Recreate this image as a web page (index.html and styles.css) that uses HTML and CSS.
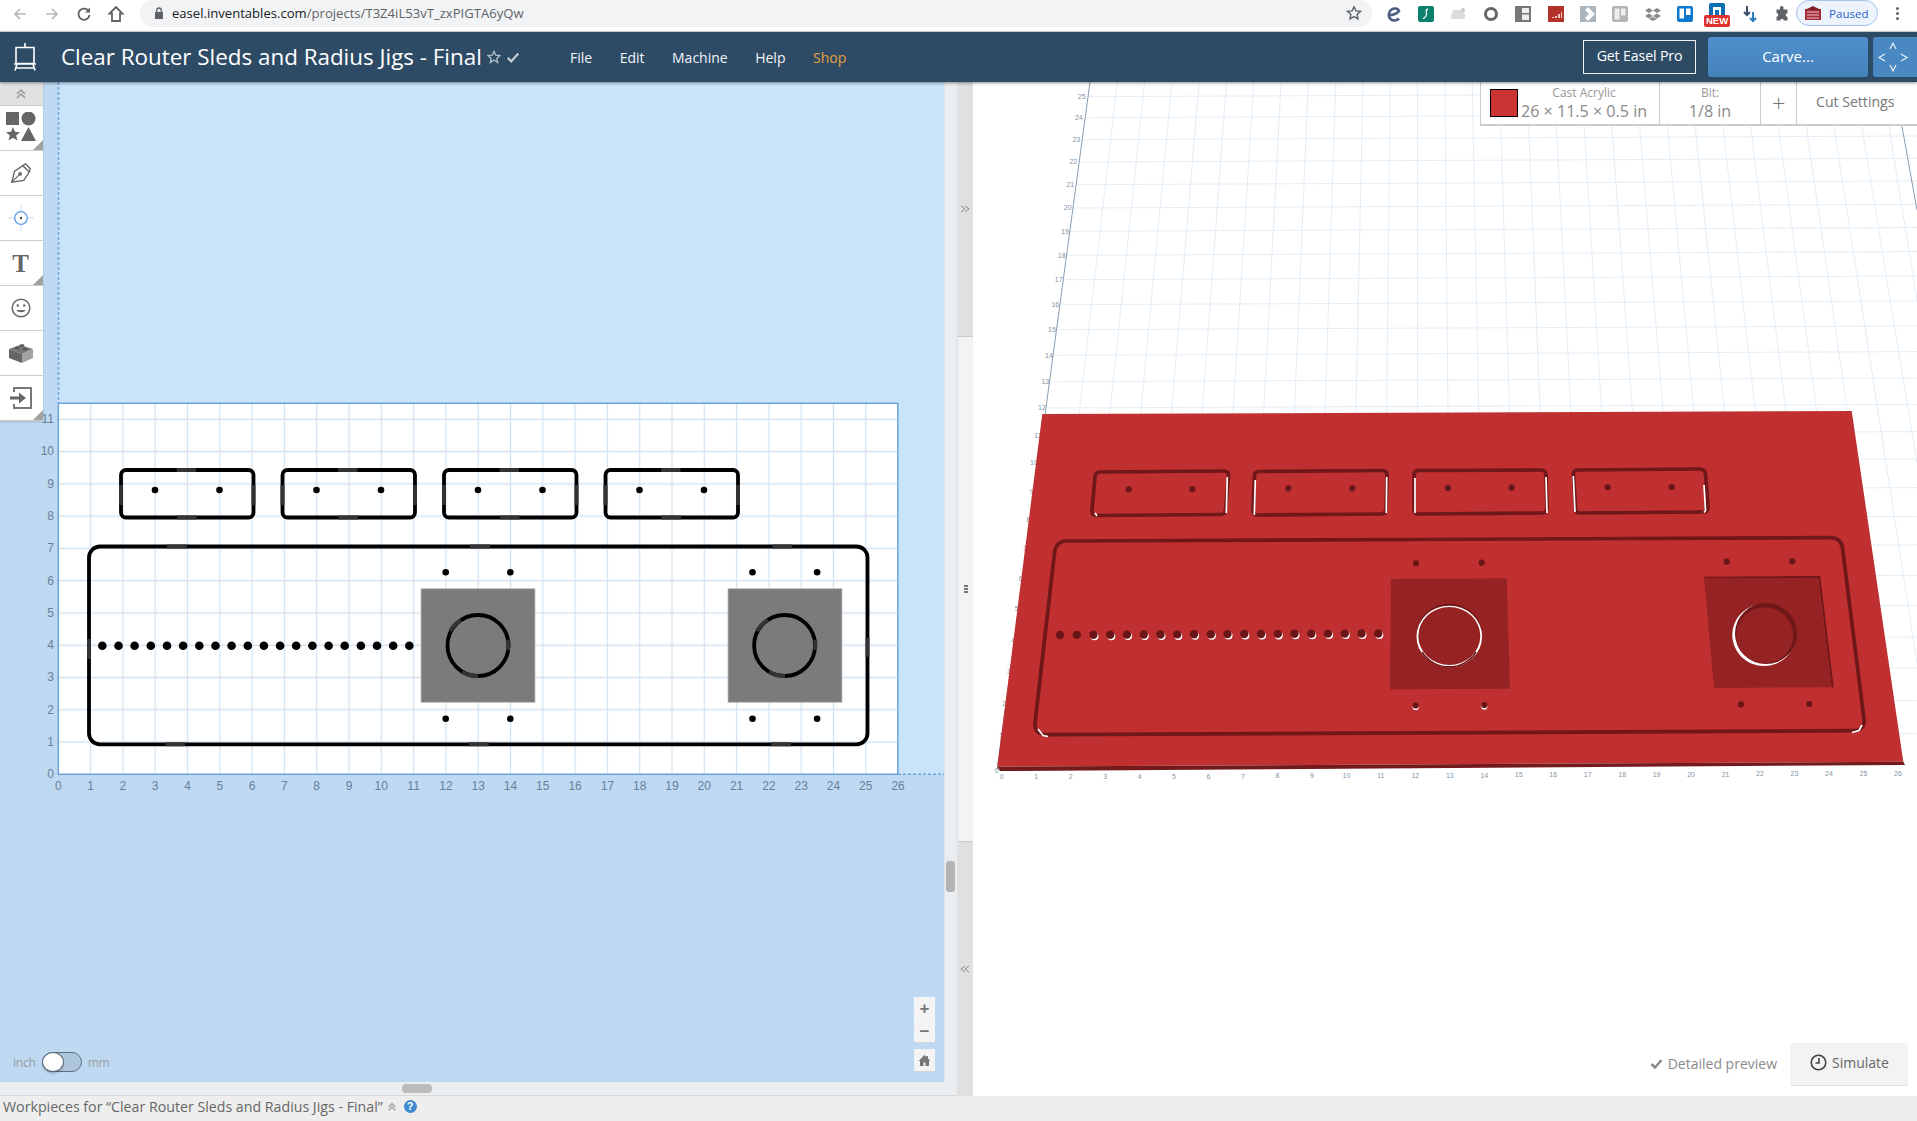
FILE: index.html
```html
<!DOCTYPE html>
<html lang="en">
<head>
<meta charset="utf-8">
<title>Clear Router Sleds and Radius Jigs - Final</title>
<link rel="stylesheet" href="styles.css">
</head>
<body>
<div class="chrome">
  <div class="slot"><svg width="16" height="16" viewBox="0 0 16 16"><path class="nav-off" d="M14 8H3M8 3L3 8l5 5"/></svg></div>
  <div class="slot"><svg width="16" height="16" viewBox="0 0 16 16"><path class="nav-off" d="M2 8h11M8 3l5 5-5 5"/></svg></div>
  <div class="slot"><svg width="16" height="16" viewBox="0 0 16 16"><path class="nav-on" d="M13 5.5A5.6 5.6 0 1 0 13.6 9"/><path class="nav-fill" d="M14 1.5v5H9z"/></svg></div>
  <div class="slot"><svg width="18" height="18" viewBox="0 0 18 18"><path class="nav-on" d="M9 2L2.5 8.5H5V16h8V8.500h2.500z"/></svg></div>
  <div class="omnibox">
    <svg class="lock" width="10" height="12" viewBox="0 0 10 12"><path d="M1 5h8v7H1z"/><path class="lock-arc" d="M2.800 5V3.200a2.200 2.200 0 0 1 4.400 0V5"/></svg>
    <span class="host">easel.inventables.com</span><span class="path">/projects/T3Z4iL53vT_zxPIGTA6yQw</span>
    <svg class="omni-star" width="16" height="16" viewBox="0 0 16 16"><path d="M8 1.800l1.900 4.100 4.500.5-3.300 3 .9 4.400L8 11.600l-4 2.200.9-4.400-3.300-3 4.500-.5z"/></svg>
  </div>
  <div class="exts">
    <div class="ext"><svg width="18" height="18" viewBox="0 0 18 18"><path d="M3 10c4 .5 9-1 11-4-1-3-6-3.500-8.500-.5S3 13 7 15c2.500 1 5 .5 7-1.500" fill="none" stroke="#4d5d80" stroke-width="2.600"/></svg></div>
    <div class="ext"><svg width="16" height="16" viewBox="0 0 16 16"><rect width="16" height="16" rx="2" fill="#0c7f6d"/><path d="M10 3C6 4 10 7 8 10s-3 2-3 2" fill="none" stroke="#fff" stroke-width="1.300"/></svg></div>
    <div class="ext"><svg width="18" height="14" viewBox="0 0 18 14"><path d="M2 8l2-5h10l2 5v4H2z" fill="#dcdcdc"/><circle cx="14" cy="3" r="2" fill="#c4c4c4"/></svg></div>
    <div class="ext"><svg width="16" height="16" viewBox="0 0 16 16"><circle cx="8" cy="8" r="5.500" fill="none" stroke="#666" stroke-width="3"/></svg></div>
    <div class="ext"><svg width="16" height="16" viewBox="0 0 16 16"><rect width="16" height="16" fill="#777"/><rect x="7" y="2" width="7" height="5" fill="#eee"/><rect x="7" y="8.500" width="7" height="5.500" fill="#eee"/></svg></div>
    <div class="ext"><svg width="16" height="16" viewBox="0 0 16 16"><rect width="16" height="16" fill="#b5322a"/><path d="M4 12h2v-1H4zM7 12h2v-2H7zM10 12h2V8h-2zM13 12h1V6h-1z" fill="#f2c9c5"/></svg></div>
    <div class="ext"><svg width="16" height="16" viewBox="0 0 16 16"><rect width="16" height="16" fill="#a9b4bd"/><path d="M8 1l7 7-7 7-3-3 4-4-4-4z" fill="#fff"/></svg></div>
    <div class="ext"><svg width="16" height="16" viewBox="0 0 16 16"><rect width="16" height="16" rx="2" fill="#b5b5b5"/><rect x="2.500" y="2.500" width="5" height="11" fill="#eee"/><rect x="9" y="2.500" width="4.500" height="7" fill="#eee"/></svg></div>
    <div class="ext"><svg width="16" height="16" viewBox="0 0 16 16"><path d="M4 2l4 2.500L4 7 0 4.500zM12 2l4 2.500L12 7 8 4.500zM4 7.500L8 10l-4 2.500L0 10zM12 7.500l4 2.500-4 2.500L8 10zM4 13l4-2 4 2-4 2z" fill="#8a8a8a"/></svg></div>
    <div class="ext"><svg width="16" height="16" viewBox="0 0 16 16"><rect width="16" height="16" rx="2" fill="#0b79d0"/><rect x="2.500" y="2.500" width="4.500" height="10" fill="#fff"/><rect x="9" y="2.500" width="4.500" height="6.500" fill="#fff"/></svg></div>
    <div class="ext ext-new"><svg width="16" height="14" viewBox="0 0 16 14"><path d="M0 2a2 2 0 0 1 2-2h12a2 2 0 0 1 2 2v12h-4V4H4v10H0z" fill="#0a6fb5"/><rect x="6" y="7" width="4" height="7" fill="#0a6fb5"/></svg><span class="new-tag">NEW</span></div>
    <div class="ext"><svg width="18" height="18" viewBox="0 0 18 18"><path d="M6 1v8M3 7l3 3 3-3" fill="none" stroke="#38506a" stroke-width="2"/><path d="M12 7v8M9 13l3 3 3-3" fill="none" stroke="#2a7fc0" stroke-width="2"/></svg></div>
    <div class="ext"><svg width="16" height="16" viewBox="0 0 16 16"><path d="M6 1.500a1.800 1.800 0 0 1 3.500 0V3.500h4v3.800a1.800 1.800 0 0 0 0 3.600v3.600h-3.700a1.800 1.800 0 0 0-3.600 0H2.500v-3.800a1.800 1.800 0 0 0 0-3.600V3.500H6z" fill="#5f6368"/></svg></div>
  </div>
  <div class="paused">
    <svg width="16" height="16" viewBox="0 0 16 16"><rect y="4" width="16" height="11" fill="#a92b3a"/><path d="M0 5l8-4 8 4z" fill="#7e1f2b"/><path d="M2 7h12M2 10h12M2 13h12" stroke="#e9c4c8"/></svg>
    <span>Paused</span>
  </div>
  <div class="dots"><i></i><i></i><i></i></div>
</div>

<header class="appbar">
  <svg class="easel" width="26" height="28" viewBox="0 0 26 28"><path d="M13 0v4M4 4.500h18v16H4zM2 21h22M5 21l-2 6.500M21 21l2 6.500M3 25h20" fill="none" stroke="#fff" stroke-width="1.600"/></svg>
  <h1 class="title">Clear Router Sleds and Radius Jigs - Final</h1>
  <svg class="title-star" width="14" height="14" viewBox="0 0 16 16"><path d="M8 1.500l2 4.400 4.700.5-3.500 3.200 1 4.700L8 11.500l-4.200 2.800 1-4.700L1.300 6.400 6 5.900z"/></svg>
  <svg class="title-check" width="14" height="14" viewBox="0 0 16 16"><path d="M2 9l4 4 8-9"/></svg>
  <nav class="menu">
    <span>File</span><span>Edit</span><span>Machine</span><span>Help</span><span class="shop">Shop</span>
  </nav>
  <button class="pro">Get Easel Pro</button>
  <button class="carve">Carve...</button>
  <button class="expand" aria-label="Expand"><svg width="44" height="40" viewBox="0 0 44 40"><path d="M17 12l3-6 3 6M12 17l-6 3.500 6 3.500M28 17l6 3.500-6 3.500M17 28l3 6 3-6"/></svg></button>
</header>

<main class="workspace">
  <section class="left">
    <div class="left-top">
      <div class="canvas">
        <svg class="board" viewBox="0 82 944 1000" width="944" height="1000">
          <defs>
            <pattern id="grid2d" x="42.150" y="758.165" width="32.300" height="32.270" patternUnits="userSpaceOnUse">
              <path class="g2" d="M16.150 0V32.270M0 16.135H32.300"/>
            </pattern>
          </defs>
          <rect class="upper" x="58" y="82" width="886" height="692"/>
          <path class="dash" d="M58.500 82V403M898 774.300H944"/>
          <rect class="sheet" x="58.300" y="403.300" width="839.500" height="371"/>
          <rect class="gridfill" x="58.300" y="403.300" width="839.500" height="371"/>
          <rect class="sheet-edge" x="58.300" y="403.300" width="839.500" height="371"/>

          <g class="cut">
            <rect x="121" y="470" width="132.500" height="47.500" rx="5"/>
            <rect x="282.500" y="470" width="132.500" height="47.500" rx="5"/>
            <rect x="444" y="470" width="132.500" height="47.500" rx="5"/>
            <rect x="605.500" y="470" width="132.500" height="47.500" rx="5"/>
            <rect x="89" y="546.500" width="778.500" height="197.800" rx="11"/>
          </g>
          <rect class="pocket" x="421" y="588.700" width="114" height="113.600"/>
          <rect class="pocket" x="728" y="588.700" width="114" height="113.600"/>
          <circle class="cut" cx="478" cy="645.500" r="30.500"/>
          <circle class="cut" cx="784.600" cy="645.500" r="30.500"/>
          <path class="tab" d="M176.700 470H196M177 517.500H196.500M121 485V505M253.500 485V505M338.200 470H357.500M338.500 517.500H358M282.500 485V505M415 485V505M499.700 470H519M500 517.500H519.500M444 485V505M576.500 485V505M661.200 470H680.500M661.500 517.500H681M605.500 485V505M738 485V505M167 546.500H187M470 546.500H490M772.500 546.500H792M165.700 744.300H185M469 744.300H488.700M771 744.300H791M89 639V659M867.500 637.700V656.700M450 631A30.500 30.500 0 0 1 461 620M462 672A30.500 30.500 0 0 0 478 676M508 650A30.500 30.500 0 0 0 508.300 640M757 631A30.500 30.500 0 0 1 768 620M769 672A30.500 30.500 0 0 0 785 676M815 650A30.500 30.500 0 0 0 815.100 640"/>

          <g class="hole-sm">
            <circle cx="155" cy="490"/><circle cx="219.500" cy="490"/><circle cx="316.500" cy="490"/><circle cx="381" cy="490"/>
            <circle cx="478" cy="490"/><circle cx="542.500" cy="490"/><circle cx="639.500" cy="490"/><circle cx="704" cy="490"/>
            <circle cx="445.700" cy="572.300"/><circle cx="510.300" cy="572.300"/><circle cx="752.500" cy="572.300"/><circle cx="817.100" cy="572.300"/>
            <circle cx="445.700" cy="718.700"/><circle cx="510.300" cy="718.700"/><circle cx="752.500" cy="718.700"/><circle cx="817.100" cy="718.700"/>
          </g>
          <g class="hole-lg">
            <circle cx="102.300" cy="645.700"/><circle cx="118.500" cy="645.700"/><circle cx="134.600" cy="645.700"/><circle cx="150.800" cy="645.700"/><circle cx="167" cy="645.700"/>
            <circle cx="183.100" cy="645.700"/><circle cx="199.300" cy="645.700"/><circle cx="215.500" cy="645.700"/><circle cx="231.600" cy="645.700"/><circle cx="247.800" cy="645.700"/>
            <circle cx="263.900" cy="645.700"/><circle cx="280.100" cy="645.700"/><circle cx="296.200" cy="645.700"/><circle cx="312.400" cy="645.700"/><circle cx="328.600" cy="645.700"/>
            <circle cx="344.700" cy="645.700"/><circle cx="360.900" cy="645.700"/><circle cx="377" cy="645.700"/><circle cx="393.200" cy="645.700"/><circle cx="409.300" cy="645.700"/>
          </g>

          <g class="axis-y">
            <text x="54" y="778">0</text><text x="54" y="746">1</text><text x="54" y="714">2</text><text x="54" y="681">3</text><text x="54" y="649">4</text><text x="54" y="617">5</text><text x="54" y="585">6</text><text x="54" y="552">7</text><text x="54" y="520">8</text><text x="54" y="488">9</text><text x="54" y="455">10</text><text x="54" y="423">11</text>
          </g>
          <g class="axis-x">
            <text x="58.300" y="790">0</text><text x="90.600" y="790">1</text><text x="122.900" y="790">2</text><text x="155.200" y="790">3</text><text x="187.500" y="790">4</text><text x="219.800" y="790">5</text><text x="252.100" y="790">6</text><text x="284.400" y="790">7</text><text x="316.700" y="790">8</text><text x="349" y="790">9</text><text x="381.300" y="790">10</text><text x="413.600" y="790">11</text><text x="445.900" y="790">12</text><text x="478.200" y="790">13</text><text x="510.500" y="790">14</text><text x="542.800" y="790">15</text><text x="575.100" y="790">16</text><text x="607.400" y="790">17</text><text x="639.700" y="790">18</text><text x="672" y="790">19</text><text x="704.300" y="790">20</text><text x="736.600" y="790">21</text><text x="768.900" y="790">22</text><text x="801.200" y="790">23</text><text x="833.500" y="790">24</text><text x="865.800" y="790">25</text><text x="898.100" y="790">26</text>
          </g>
        </svg>

        <div class="toolbar">
          <div class="tool-top"><svg width="12" height="12" viewBox="0 0 12 12"><path d="M2 6l4-4 4 4M2 10l4-4 4 4"/></svg></div>
          <div class="tool corner"><svg width="32" height="32" viewBox="0 0 32 32"><rect x="1" y="0" width="13" height="13" fill="#666"/><circle cx="23.500" cy="6.500" r="7" fill="#666"/><path d="M8 15l2 4.800 5 .4-3.800 3.300 1.200 5L8 25.800l-4.400 2.700 1.200-5L1 20.200l5-.4z" fill="#666"/><path d="M23.500 15l7.500 14H16z" fill="#666"/></svg></div>
          <div class="tool"><svg width="22" height="22" viewBox="0 0 24 24"><path d="M2 22l3-12 9-6 7 7-6 9z" fill="none" stroke="#666" stroke-width="1.500"/><path d="M14 4l3-2 5 5-1 4" fill="none" stroke="#666" stroke-width="1.500"/><path d="M2 22l8-8" stroke="#666" stroke-width="1.300"/><circle cx="11" cy="13" r="2" fill="#666"/></svg></div>
          <div class="tool"><svg width="26" height="26" viewBox="0 0 26 26"><path d="M13 0V26M0 13H26" stroke="#c7dcf3" stroke-width="1"/><circle cx="13" cy="13" r="6.300" fill="#fff" stroke="#5f9fe6" stroke-width="1.300"/><circle cx="13" cy="13" r="1.200" fill="#444"/></svg></div>
          <div class="tool corner"><span class="tool-t">T</span></div>
          <div class="tool"><svg width="22" height="22" viewBox="0 0 22 22"><circle cx="11" cy="11" r="8.800" fill="none" stroke="#666" stroke-width="1.500"/><circle cx="7.800" cy="8.500" r="1.200" fill="#666"/><circle cx="14.200" cy="8.500" r="1.200" fill="#666"/><path d="M6.500 13c1 3 8 3 9 0z" fill="#666"/></svg></div>
          <div class="tool"><svg width="28" height="22" viewBox="0 0 28 22"><path d="M2 7l11-4 13 4-11 5z" fill="#777"/><path d="M2 7l13 5v9L2 16z" fill="#666"/><path d="M15 12l11-5v9l-11 5z" fill="#a3a3a3"/><ellipse cx="10" cy="6" rx="2.500" ry="1.300" fill="#555"/><ellipse cx="15" cy="3.500" rx="2.500" ry="1.300" fill="#555"/><ellipse cx="18" cy="7" rx="2.500" ry="1.300" fill="#555"/></svg></div>
          <div class="tool corner"><svg width="24" height="24" viewBox="0 0 24 24"><path d="M5 6V2h17v20H5v-4" fill="none" stroke="#777" stroke-width="2"/><path d="M1 10.500h9V6.500l7 5.500-7 5.500v-4H1z" fill="#666"/></svg></div>
        </div>

        <div class="units">
          <span>inch</span>
          <div class="toggle"><i></i></div>
          <span>mm</span>
        </div>

        <div class="zoomer">
          <div class="zoom-pair"><b>+</b><b>−</b></div>
          <div class="zoom-home"><svg width="13" height="13" viewBox="0 0 13 13"><path d="M6.500 1L.5 7H2v5h3.500V8.500h2V12H11V7h1.500L10 4.500V2H8.500v1z" fill="#777"/></svg></div>
        </div>
      </div>
      <div class="vscroll"><i></i></div>
    </div>
    <div class="hscroll"><i></i></div>
  </section>

  <aside class="divider">
    <div class="div-cap"><svg width="10" height="8" viewBox="0 0 10 8"><path d="M1 1l4 3-4 3M5 1l4 3-4 3"/></svg></div>
    <div class="div-mid"><i></i><i></i><i></i></div>
    <div class="div-cap"><svg width="10" height="8" viewBox="0 0 10 8"><path d="M5 1L1 4l4 3M9 1L5 4l4 3"/></svg></div>
  </aside>

  <section class="preview">
    <svg class="scene" viewBox="973 82 944 1014" width="944" height="1014">
      <g class="g3">
        <path d="M1117.300 82L1079 414M1144.600 82L1109.800 414M1171.900 82L1140.600 414M1199.200 82L1171.300 414M1226.500 82L1202 414M1253.800 82L1232.800 414M1281.100 82L1263.600 414M1308.400 82L1294.300 414M1335.700 82L1325 414M1363 82L1355.800 414M1390.300 82L1386.600 414M1417.600 82V414M1444.900 82L1448 414M1472.200 82L1478.800 414M1499.500 82L1509.600 414M1526.800 82L1540.300 414M1554.100 82L1571 414M1581.400 82L1601.800 414M1608.700 82L1632.600 414M1636 82L1663.300 414M1663.300 82L1694 414M1690.600 82L1724.800 414M1717.900 82L1755.600 414M1745.200 82L1786.300 414M1772.500 82L1817 414M1799.800 82L1847.800 414M1827 82L1932 760M1854.400 82L1917 463M1881.700 82L1917 300"/>
        <path d="M1088 96.700L1917 93M1085 117.700L1917 114M1082 139.700L1917 136M1079 162L1917 158.300M1076 184.700L1917 181M1073 208L1917 204.300M1070 231.300L1917 227.600M1067 255.300L1917 251.600M1064 279.700L1917 276M1060 304.700L1917 301M1057 329.700L1917 326M1054 355.300L1917 351.600M1050 381.700L1917 378M1047 408L1917 404.300M1043 435.300L1917 431.600M1039 462.700L1917 459M1037 491.300L1917 487.600M1033 520L1917 516.300M1030 548.700L1917 545M1026 579L1917 575.300M1022 609L1917 605.300M1018 640.700L1917 637M1014 671.700L1917 668M1010 704L1917 700.300M1005 737L1917 733.300"/>
      </g>
      <path class="axis3" d="M1090 82L997 770M1894 82L1917 210"/>
      <g class="ticks-y">
        <text x="1081.700" y="99">25</text><text x="1079" y="120">24</text><text x="1076.300" y="142">23</text><text x="1073.300" y="164">22</text><text x="1070.300" y="187">21</text><text x="1067.700" y="210">20</text><text x="1065" y="233.500">19</text><text x="1061.700" y="257.500">18</text><text x="1058.700" y="282">17</text><text x="1055.300" y="307">16</text><text x="1052" y="332">15</text><text x="1049" y="357.500">14</text><text x="1045.300" y="384">13</text><text x="1042" y="410">12</text><text x="1038" y="437.500">11</text><text x="1034" y="465">10</text><text x="1031.700" y="493.500">9</text><text x="1028.300" y="522">8</text><text x="1025" y="551">7</text><text x="1020.700" y="581">6</text><text x="1016.700" y="611">5</text><text x="1013" y="643">4</text><text x="1009" y="674">3</text><text x="1004.300" y="706">2</text><text x="1001" y="738">1</text><text x="996.700" y="773">0</text>
      </g>
      <g class="ticks-x">
        <text x="1001.700" y="779">0</text><text x="1036.200" y="779">1</text><text x="1070.600" y="779">2</text><text x="1105.100" y="779">3</text><text x="1139.600" y="778.500">4</text><text x="1174" y="778.500">5</text><text x="1208.500" y="778.500">6</text><text x="1243" y="778.500">7</text><text x="1277.500" y="778">8</text><text x="1312" y="778">9</text><text x="1346.400" y="778">10</text><text x="1380.900" y="778">11</text><text x="1415.300" y="777.500">12</text><text x="1449.800" y="777.500">13</text><text x="1484.300" y="777.500">14</text><text x="1518.700" y="777">15</text><text x="1553.200" y="777">16</text><text x="1587.700" y="777">17</text><text x="1622.200" y="777">18</text><text x="1656.600" y="776.500">19</text><text x="1691.100" y="776.500">20</text><text x="1725.600" y="776.500">21</text><text x="1760" y="776">22</text><text x="1794.500" y="776">23</text><text x="1829" y="776">24</text><text x="1863.500" y="775.500">25</text><text x="1898" y="775.500">26</text>
      </g>

      <polygon class="sheet3" points="1042.300,414 1851.700,411 1903.300,761.700 997.300,766.700"/>
      <polygon class="band3" points="997.300,766.700 1903.300,761.700 1905,765 1000,771"/>

      <polygon class="pocket3" points="1391,579 1506.700,578.300 1510,688.700 1390,689.300"/>
      <path class="pocket3-edge" d="M1704 577.700L1819.300 577L1832.700 687.300"/>
      <polygon class="pocket3" points="1704,577.700 1818.300,578 1831.500,687.300 1714,688"/>

      <g class="cut3">
        <path d="M1100 472L1224 471Q1229 471 1228.500 476L1225.500 510Q1225 514.500 1220.500 514.500L1096 515.500Q1091.500 515.500 1092 510L1095 477Q1095.500 472 1100 472Z"/>
        <path d="M1259 471.500L1382 470.500Q1387 470.500 1387 475L1386 509Q1386 514 1381 514L1257 515Q1253 515 1253 510L1254.500 476Q1254.500 471.500 1259 471.500Z"/>
        <path d="M1418 470.500L1541 470Q1546 470 1546 475L1547 508Q1547 513 1542 513L1418 514Q1414 514 1414 509L1414 475Q1414 470.500 1418 470.500Z"/>
        <path d="M1577 470L1700 469Q1705 469 1705.500 474L1708 507Q1708 512 1703 512L1580 513Q1575.500 513 1575.500 508L1573.500 475Q1573 470 1577 470Z"/>
        <path d="M1066 541L1830 537.700Q1841 537.700 1842.500 548L1864 719Q1865 730.700 1853 730.700L1048 734.700Q1034 734.700 1035 723L1054.500 553Q1056 541.500 1066 541Z"/>
      </g>
      <path class="glint" d="M1227.300 477L1226.300 513M1095 513L1097 516M1255.300 480L1254.300 515M1386.700 477L1386.300 513M1415 478V513M1546 477L1547 513M1573.300 476L1575 512M1704 485L1705.500 510M1704 512.500L1706 510M1038 729L1043 735.500L1048 736.500M1862 725L1859 730.500L1852 732.500"/>

      <g class="hole3">
        <circle cx="1128.700" cy="489.300"/><circle cx="1192.300" cy="489"/><circle cx="1288.300" cy="488.300"/><circle cx="1352.300" cy="488.300"/><circle cx="1448" cy="488"/><circle cx="1511.700" cy="487.700"/><circle cx="1607.700" cy="487.300"/><circle cx="1671.700" cy="487"/>
        <circle cx="1416" cy="563.300"/><circle cx="1481.700" cy="562.700"/><circle cx="1726.700" cy="561.700"/><circle cx="1792.300" cy="561.300"/>
        <circle cx="1741" cy="704.300"/><circle cx="1809.300" cy="704"/>
      </g>
      <g class="hole3-white">
        <circle cx="1415.700" cy="707"/><circle cx="1484.300" cy="706.500"/>
      </g>
      <g class="hole3">
        <circle cx="1415.700" cy="705.500"/><circle cx="1484.300" cy="705"/>
      </g>

      <g class="row-white">
        <circle cx="1094.500" cy="636.300"/><circle cx="1111.300" cy="636.200"/><circle cx="1128" cy="636.100"/><circle cx="1144.800" cy="636"/><circle cx="1161.500" cy="636"/><circle cx="1178.300" cy="635.900"/><circle cx="1195" cy="635.800"/><circle cx="1211.800" cy="635.700"/><circle cx="1228.500" cy="635.600"/><circle cx="1245.300" cy="635.500"/><circle cx="1262" cy="635.500"/><circle cx="1278.800" cy="635.400"/><circle cx="1295.500" cy="635.300"/><circle cx="1312.300" cy="635.200"/><circle cx="1329" cy="635.100"/><circle cx="1345.800" cy="635.100"/><circle cx="1362.500" cy="635"/><circle cx="1379.300" cy="635"/>
      </g>
      <g class="row-dark">
        <circle cx="1060" cy="635"/><circle cx="1076.800" cy="634.900"/><circle cx="1093.500" cy="634.800"/><circle cx="1110.300" cy="634.700"/><circle cx="1127" cy="634.600"/><circle cx="1143.800" cy="634.500"/><circle cx="1160.500" cy="634.500"/><circle cx="1177.300" cy="634.400"/><circle cx="1194" cy="634.300"/><circle cx="1210.800" cy="634.200"/><circle cx="1227.500" cy="634.100"/><circle cx="1244.300" cy="634"/><circle cx="1261" cy="634"/><circle cx="1277.800" cy="633.900"/><circle cx="1294.500" cy="633.800"/><circle cx="1311.300" cy="633.700"/><circle cx="1328" cy="633.600"/><circle cx="1344.800" cy="633.600"/><circle cx="1361.500" cy="633.500"/><circle cx="1378.300" cy="633.500"/>
      </g>

      <ellipse class="ring-dark" cx="1449.300" cy="635" rx="32.800" ry="31.300"/>
      <ellipse class="ring-white" cx="1449.300" cy="636.500" rx="32.800" ry="30.800"/>
      <ellipse class="ring-inner" cx="1449.300" cy="636" rx="31" ry="29"/>
      <path class="ring-shade" d="M1422 652A31 29 0 0 0 1476 652"/>

      <ellipse class="ring-white" cx="1764" cy="635" rx="31.800" ry="31"/>
      <ellipse class="ring-dark" cx="1766" cy="633.500" rx="31" ry="30.500"/>
      <ellipse class="ring-inner" cx="1764.800" cy="635.200" rx="28.500" ry="28"/>
    </svg>

    <div class="settings">
      <div class="set-material">
        <div class="swatch"></div>
        <div class="mat-text"><span class="small">Cast Acrylic</span><span class="big">26 × 11.5 × 0.5 in</span></div>
      </div>
      <div class="set-bit"><span class="small">Bit:</span><span class="big">1/8 in</span></div>
      <div class="set-plus">+</div>
      <div class="set-cut">Cut Settings</div>
    </div>

    <div class="actions">
      <div class="detailed"><svg width="13" height="11" viewBox="0 0 13 11"><path d="M1.500 6l3.500 3.500 6.500-7.500"/></svg>Detailed preview</div>
      <div class="simulate"><svg width="17" height="17" viewBox="0 0 17 17"><circle cx="8.500" cy="8.500" r="7.300"/><path d="M9 4v5H5.500"/></svg>Simulate</div>
    </div>
  </section>
</main>

<footer class="footer">
  <span>Workpieces for “Clear Router Sleds and Radius Jigs - Final”</span>
  <svg class="foot-chev" width="10" height="10" viewBox="0 0 12 12"><path d="M2 6l4-4 4 4M2 10l4-4 4 4"/></svg>
  <span class="help">?</span>
</footer>
</body>
</html>
```
FILE: styles.css
```css
* { box-sizing: border-box; }
html, body { margin: 0; height: 100%; overflow: hidden; }
body {
  display: flex; flex-direction: column; width: 1917px; height: 1121px;
  background: #fff; font-family: "Open Sans", "Liberation Sans", sans-serif; color: #555;
}

/* browser chrome */
.chrome { height: 32px; flex: none; display: flex; align-items: flex-start; padding-left: 4px; background: #fff; border-bottom: 1px solid #d8d8d8; }
.slot { width: 32px; height: 27px; display: flex; align-items: center; justify-content: center; }
.nav-off { fill: none; stroke: #b4b8bc; stroke-width: 1.7; }
.nav-on { fill: none; stroke: #5f6368; stroke-width: 1.8; }
.nav-fill { fill: #5f6368; }
.omnibox { width: 1233px; height: 27px; margin-left: 8px; border-radius: 14px; background: #f1f3f4; display: flex; align-items: center; padding: 0 10px 1px 14px; font: 13.100px "Open Sans", sans-serif; }
.lock { margin-right: 8px; fill: #5f6368; }
.lock-arc { fill: none; stroke: #5f6368; stroke-width: 1.300; }
.host { color: #202124; }
.path { color: #5f6368; }
.omni-star { margin-left: auto; fill: none; stroke: #5f6368; stroke-width: 1.400; }
.exts { display: flex; margin-left: 5.500px; width: 420.500px; flex: none; }
.ext { width: 32.350px; flex: none; height: 27px; display: flex; align-items: center; justify-content: center; position: relative; }
.ext-new svg { margin-top: -8px; }
.new-tag { position: absolute; left: 3px; top: 15px; width: 26px; height: 12px; background: #e0322c; border-radius: 2px; color: #fff; font: 700 9.500px/12px "Liberation Sans", sans-serif; text-align: center; }
.paused { width: 82px; height: 26px; margin-left: -2px; border: 1px solid #a3c2ee; border-radius: 13px; background: #edf3fd; display: flex; align-items: center; gap: 8px; padding-left: 8px; color: #2b61c9; font-size: 11.500px; }
.dots { width: 39px; height: 27px; display: flex; flex-direction: column; align-items: center; justify-content: center; gap: 2px; }
.dots i { width: 3px; height: 3px; border-radius: 50%; background: #5f6368; }

/* app bar */
.appbar { height: 50px; flex: none; background: #2e4b66; display: flex; align-items: center; position: relative; z-index: 5; box-shadow: 0 1px 3px rgba(0,0,0,.45); color: #fff; }
.easel { margin-left: 12px; }
.title { margin: 0 0 0 23px; font: 400 22.400px/48px "Open Sans", sans-serif; width: 425px; white-space: nowrap; }
.title-star { margin-left: 1px; fill: none; stroke: #b4c0cc; stroke-width: 1.500; }
.title-check { margin-left: 5px; fill: none; stroke: #c4ced8; stroke-width: 2.500; }
.menu { display: flex; margin-left: 50px; font-size: 14px; color: #f1f4f7; }
.menu span { margin-right: 27.500px; }
.menu .shop { color: #e5a03c; margin-right: 0; }
button { font-family: inherit; color: #fff; cursor: pointer; }
.pro { margin-left: auto; width: 113px; height: 34px; background: transparent; border: 1px solid #eef2f6; font-size: 14.200px; letter-spacing: -.15px; padding: 0 0 3px; }
.carve { margin-left: 12px; width: 160px; height: 40px; background: linear-gradient(#4f8fc9, #4583bd); border: 0; border-radius: 3px; font-size: 15px; padding: 0 0 3px; }
.expand { margin-left: 5px; width: 44px; height: 40px; background: #4a88c2; border: 0; border-radius: 3px 0 0 3px; padding: 0; }
.expand svg { display: block; fill: none; stroke: #e8f0f8; stroke-width: 1.200; }

/* workspace */
.workspace { flex: 1; display: flex; min-height: 0; }
.left { width: 957px; flex: none; display: flex; flex-direction: column; background: #ebeef1; }
.left-top { display: flex; height: 1000px; flex: none; }
.canvas { width: 944px; flex: none; position: relative; background: #bed9f1; overflow: hidden; }
.board { display: block; }
.upper { fill: #c9e3fb; }
.dash { fill: none; stroke: #6ea5d8; stroke-width: 1.500; stroke-dasharray: 3 2; }
.sheet { fill: #fff; }
.gridfill { fill: url(#grid2d); }
.g2 { fill: none; stroke: #d2e3f3; stroke-width: 1.300; }
.sheet-edge { fill: none; stroke: #6ea5d8; stroke-width: 1.500; }
.cut, .cut rect { fill: none; stroke: #000; stroke-width: 3.800; }
.tab { fill: none; stroke: #333; stroke-width: 3.900; }
.pocket { fill: #7b7b7b; stroke: #bdbdbd; stroke-width: .8; }
.hole-sm circle { r: 3.300px; fill: #000; }
.hole-lg circle { r: 4.300px; fill: #000; }
.axis-y text, .axis-x text { font: 12px "Liberation Sans", sans-serif; fill: #66809a; }
.axis-y text { text-anchor: end; }
.axis-x text { text-anchor: middle; }

.toolbar { position: absolute; left: 0; top: 0; width: 43px; display: flex; flex-direction: column; background: #fff; box-shadow: 0 1px 2px rgba(0,0,0,.15); }
.tool-top { height: 24px; padding-right: 2px; background: #e2e2e2; border-bottom: 1px solid #ccc; display: flex; align-items: center; justify-content: center; }
.tool-top svg, .foot-chev { fill: none; stroke: #999; stroke-width: 1.500; }
.tool { height: 45px; padding-right: 2px; border-bottom: 1px solid #ccc; display: flex; align-items: center; justify-content: center; position: relative; background: #fff; }
.corner::after { content: ""; position: absolute; right: 0; bottom: 0; border-style: solid; border-width: 0 0 10px 10px; border-color: transparent transparent #a0a0a0 transparent; }
.tool-t { font: 700 25px/1 "Liberation Serif", serif; color: #666; }

.units { position: absolute; left: 13px; bottom: 10px; display: flex; align-items: center; gap: 6px; font-size: 12px; color: #9a9ea2; letter-spacing: -.2px; }
.toggle { width: 40px; height: 20px; border-radius: 10px; background: #aec6dc; border: 1px solid #5f6f7f; position: relative; }
.toggle i { position: absolute; left: 0; top: 0; width: 20px; height: 18px; border-radius: 50%; background: #fff; box-shadow: 0 0 0 1px #5f6f7f, 0 2px 3px rgba(0,0,0,.3); }
.zoomer { position: absolute; left: 914px; top: 915px; width: 21px; display: flex; flex-direction: column; gap: 6px; }
.zoom-pair, .zoom-home { background: #f4f4f4; border-bottom: 1px solid #d5d5d5; display: flex; flex-direction: column; align-items: center; justify-content: center; }
.zoom-pair { height: 46px; gap: 4px; }
.zoom-pair b { font: 700 17px/19px "Liberation Sans", sans-serif; color: #777; }
.zoom-home { height: 23px; }

.vscroll { width: 13px; flex: none; position: relative; border-left: 1px solid #e2e5e8; }
.vscroll i { position: absolute; left: 1px; top: 779px; width: 9px; height: 31px; border-radius: 3px; background: #b4b4b4; }
.hscroll { height: 14px; flex: none; position: relative; border-bottom: 1px solid #d8d8d8; }
.hscroll i { position: absolute; left: 402px; top: 2px; width: 30px; height: 9px; border-radius: 4px; background: #bbb; }

.divider { width: 16px; flex: none; display: flex; flex-direction: column; background: #e0e0e0; }
.div-cap { height: 254px; display: flex; align-items: center; justify-content: center; flex: none; }
.div-cap svg { fill: none; stroke: #888; stroke-width: 1; }
.div-cap:last-child { flex: 1; }
.div-mid { flex: none; height: 506px; background: #f3f3f3; border-top: 1px solid #ccc; border-bottom: 1px solid #ccc; border-left: 1px solid #e0e0e0; display: flex; flex-direction: column; align-items: center; justify-content: center; gap: 1px; }
.div-mid i { width: 4px; height: 2px; background: #777; }

.preview { flex: 1; position: relative; background: #fff; overflow: hidden; }
.scene { display: block; }
.g3 path { fill: none; stroke: #e3edf7; stroke-width: 1; }
.axis3 { fill: none; stroke: #8a9cb0; stroke-width: 1; }
.ticks-y text, .ticks-x text { font: 7px "Liberation Sans", sans-serif; fill: #8494a6; text-anchor: middle; }
.sheet3 { fill: #c13030; }
.band3 { fill: #721a1c; }
.pocket3 { fill: #962323; }
.pocket3-edge { fill: none; stroke: #6f1719; stroke-width: 2; }
.cut3 path { fill: none; stroke: #6f1719; stroke-width: 3.700; }
.glint { fill: none; stroke: #fff; stroke-width: 1.700; }
.hole3 circle { r: 3.100px; fill: #6a1517; }
.hole3-white circle { r: 3.100px; fill: #fff; }
.row-dark circle { r: 4.200px; fill: #6a1517; }
.row-white circle { r: 4px; fill: #fff; }
.ring-dark { fill: #6f1719; }
.ring-white { fill: #fff; }
.ring-inner { fill: #962323; }
.ring-shade { fill: none; stroke: #6f1719; stroke-width: 1.500; }

.settings { position: absolute; right: 0; top: 0; width: 437px; height: 44px; display: flex; background: #fff; border-left: 1px solid #ccc; border-bottom: 2px solid #ccc; color: #888; }
.settings > div { border-right: 1px solid #ccc; }
.set-material { width: 179px; display: flex; align-items: center; padding-left: 9px; gap: 3px; }
.swatch { width: 28px; height: 28px; background: #cc3333; border: 1px solid #000; flex: none; }
.mat-text, .set-bit { display: flex; flex-direction: column; align-items: center; }
.small { font-size: 12px; line-height: 14px; margin-bottom: 1px; color: #999; }
.big { font-size: 16.100px; line-height: 20px; white-space: nowrap; color: #8a8a8a; }
.set-bit { width: 101px; justify-content: center; }
.set-plus { width: 36px; display: flex; align-items: center; justify-content: center; font: 300 24px/1 "Open Sans", sans-serif; color: #777; }
.settings > .set-cut { flex: 1; border-right: 0; display: flex; align-items: center; padding: 0 0 3px 19px; font-size: 14.100px; color: #777; }

.actions { position: absolute; right: 9px; bottom: 10px; display: flex; align-items: center; gap: 13px; font-size: 14px; }
.detailed { display: flex; align-items: center; gap: 5px; color: #8a8a8a; padding-bottom: 3px; }
.detailed svg { fill: none; stroke: #8a8a8a; stroke-width: 2.500; }
.simulate { width: 118px; height: 43px; background: #f3f3f3; border-bottom: 1px solid #e4e4e4; display: flex; align-items: center; gap: 5px; padding: 0 0 3px 20px; color: #666; border-radius: 2px; }
.simulate svg { fill: none; stroke: #444; stroke-width: 1.600; }

.footer { height: 25px; flex: none; background: #eee; display: flex; align-items: center; padding: 0 0 4px 3px; font-size: 14.200px; color: #666; }
.foot-chev { margin-left: 4px; }
.help { margin-left: 7px; width: 13px; height: 13px; border-radius: 50%; background: #3f8bd0; color: #fff; font: 700 11px/13px "Liberation Sans", sans-serif; text-align: center; }
```
